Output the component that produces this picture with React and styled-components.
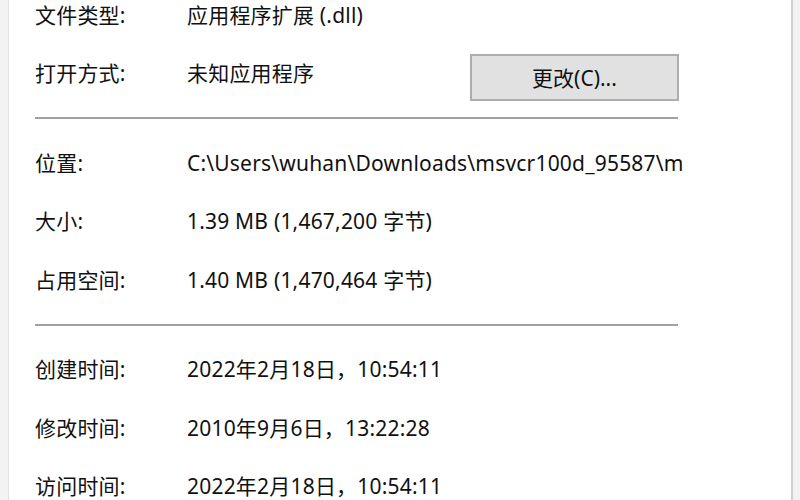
import React from "react"
import styled, { createGlobalStyle } from "styled-components"

const GlobalStyle = createGlobalStyle`
  html, body {
    margin: 0;
    padding: 0;
    background: #ffffff;
  }
  body {
    font-family: "Noto Sans", "Noto Sans CJK SC", sans-serif;
    color: #111111;
  }
`

const general = [
  { label: "文件类型:", value: "应用程序扩展 (.dll)" },
  { label: "打开方式:", value: "未知应用程序", button: "更改(C)..." },
]

const place = [
  { label: "位置:", value: "C:\\Users\\wuhan\\Downloads\\msvcr100d_95587\\m" },
  { label: "大小:", value: "1.39 MB (1,467,200 字节)" },
  { label: "占用空间:", value: "1.40 MB (1,470,464 字节)" },
]

const times = [
  { label: "创建时间:", value: "2022年2月18日，10:54:11" },
  { label: "修改时间:", value: "2010年9月6日，13:22:28" },
  { label: "访问时间:", value: "2022年2月18日，10:54:11" },
]

const Section = ({ rows }) => (
  <Group>
    {rows.map(row => (
      <Row key={row.label}>
        <Label>{row.label}</Label>
        <Value>{row.value}</Value>
        {row.button && <Button type="button">{row.button}</Button>}
      </Row>
    ))}
  </Group>
)

const App = () => {
  return (
    <>
      <GlobalStyle />
      <Window>
        <LeftEdge />
        <Page>
          <Section rows={general} />
          <Separator />
          <Section rows={place} />
          <Separator />
          <Section rows={times} />
        </Page>
        <RightEdge />
      </Window>
    </>
  )
}

const Window = styled.div`
  display: flex;
  width: 800px;
  height: 500px;
  overflow: hidden;
  background: #ffffff;
`

const LeftEdge = styled.div`
  flex: 0 0 8px;
  background: #f3f3f3;
  border-right: 1px solid #e2e2e2;
`

const RightEdge = styled.div`
  flex: 0 0 7px;
  background: #f2f2f2;
  border-left: 2px solid #d0d0d0;
`

const Page = styled.div`
  flex: 1;
  display: flex;
  flex-direction: column;
  padding-left: 26px;
  margin-top: -14px;
`

const Group = styled.div`
  flex-shrink: 0;
  display: flex;
  flex-direction: column;
`

const Row = styled.div`
  flex-shrink: 0;
  display: grid;
  grid-template-columns: 152px 283px 209px;
  align-items: center;
  height: 58.5px;
  font-size: 21px;
  letter-spacing: 0.2px;
  line-height: 1;
`

const Label = styled.span`
  white-space: nowrap;
`

const Value = styled.span`
  white-space: nowrap;
`

const Button = styled.button`
  height: 47px;
  margin-top: 7px;
  background: #e1e1e1;
  border: 2px solid #adadad;
  font-family: inherit;
  font-size: 21px;
  color: #111111;
  padding: 0;
`

const Separator = styled.div`
  flex-shrink: 0;
  width: 643px;
  height: 2px;
  margin: 14px 0 15px;
  background: #a0a0a0;
`

export default App
